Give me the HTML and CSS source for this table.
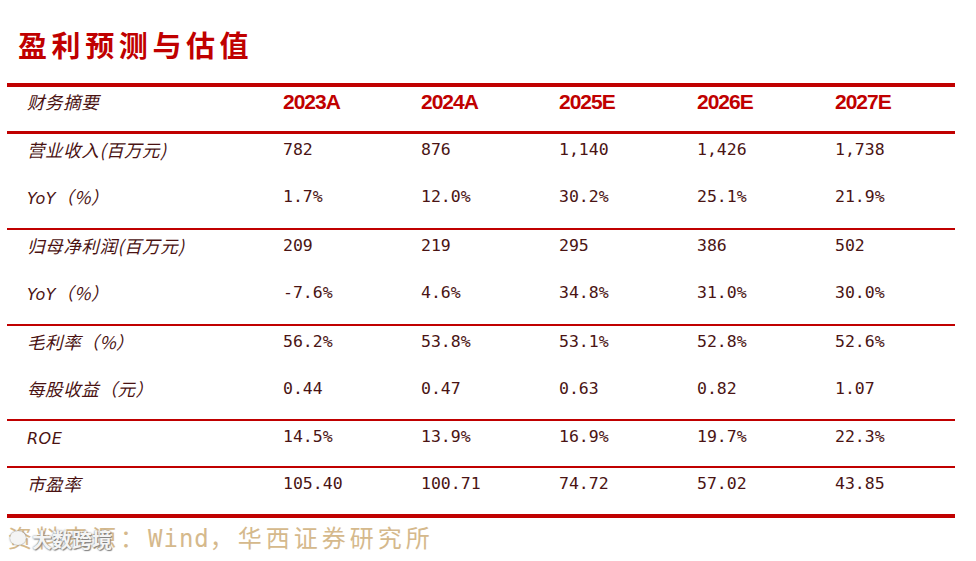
FILE: index.html
```html
<!DOCTYPE html>
<html lang="zh-CN">
<head>
<meta charset="utf-8">
<link rel="stylesheet" href="styles.css">
</head>
<body>
<div class="page">
  <h1 class="title">盈利预测与估值</h1>
  <div class="table">
    <div class="row head">
      <div class="label">财务摘要</div>
      <div class="year">2023A</div>
      <div class="year">2024A</div>
      <div class="year">2025E</div>
      <div class="year">2026E</div>
      <div class="year">2027E</div>
    </div>
    <div class="group">
      <div class="row">
        <div class="label">营业收入(百万元)</div>
        <div class="num">782</div><div class="num">876</div><div class="num">1,140</div><div class="num">1,426</div><div class="num">1,738</div>
      </div>
      <div class="row">
        <div class="label"><span class="lat">YoY</span>（%）</div>
        <div class="num">1.7%</div><div class="num">12.0%</div><div class="num">30.2%</div><div class="num">25.1%</div><div class="num">21.9%</div>
      </div>
    </div>
    <div class="group">
      <div class="row">
        <div class="label">归母净利润(百万元)</div>
        <div class="num">209</div><div class="num">219</div><div class="num">295</div><div class="num">386</div><div class="num">502</div>
      </div>
      <div class="row">
        <div class="label"><span class="lat">YoY</span>（%）</div>
        <div class="num">-7.6%</div><div class="num">4.6%</div><div class="num">34.8%</div><div class="num">31.0%</div><div class="num">30.0%</div>
      </div>
    </div>
    <div class="group">
      <div class="row">
        <div class="label">毛利率（%）</div>
        <div class="num">56.2%</div><div class="num">53.8%</div><div class="num">53.1%</div><div class="num">52.8%</div><div class="num">52.6%</div>
      </div>
      <div class="row short">
        <div class="label">每股收益（元）</div>
        <div class="num">0.44</div><div class="num">0.47</div><div class="num">0.63</div><div class="num">0.82</div><div class="num">1.07</div>
      </div>
    </div>
    <div class="group">
      <div class="row single">
        <div class="label"><span class="lat">ROE</span></div>
        <div class="num">14.5%</div><div class="num">13.9%</div><div class="num">16.9%</div><div class="num">19.7%</div><div class="num">22.3%</div>
      </div>
    </div>
    <div class="group last">
      <div class="row single2">
        <div class="label">市盈率</div>
        <div class="num">105.40</div><div class="num">100.71</div><div class="num">74.72</div><div class="num">57.02</div><div class="num">43.85</div>
      </div>
    </div>
  </div>
  <div class="source">资料来源：<span class="mono">Wind</span>，华西证券研究所
    <div class="watermark"><span class="wm-icon"></span>大数跨境</div>
  </div>
</div>
</body>
</html>
```

FILE: styles.css
```css
html, body {
  margin: 0;
  padding: 0;
  background: #ffffff;
}
.page {
  width: 976px;
  height: 561px;
  position: relative;
  overflow: hidden;
}
.title {
  margin: 0;
  padding: 26px 0 0 18px;
  height: 56px;
  box-sizing: border-box;
  font-family: "Noto Sans CJK SC", sans-serif;
  font-weight: 700;
  font-size: 29px;
  line-height: 36px;
  letter-spacing: 4.6px;
  color: #c00000;
}
.table {
  margin-left: 7px;
  width: 948px;
  border-top: 4px solid #c00000;
  margin-top: 27px;
}
.row {
  display: grid;
  grid-template-columns: 276px 138px 138px 138px 138px 1fr;
  height: 47px;
  align-items: start;
  padding-top: 3px;
  box-sizing: border-box;
}
.row.short { height: 46px; }
.row.single { height: 45px; }
.row.single2 { height: 46px; }
.head {
  height: 47px;
  border-bottom: 3px solid #c00000;
  padding-top: 0;
  box-sizing: border-box;
}
.group {
  border-bottom: 2px solid #c00000;
}
.group.last {
  border-bottom: 4px solid #c00000;
}
.label {
  padding-left: 20px;
  font-family: "Noto Sans CJK SC", sans-serif;
  font-style: italic;
  font-weight: 400;
  font-size: 17.5px;
  line-height: 26px;
  letter-spacing: 0.6px;
  color: #4a1212;
}
.label .lat {
  font-family: "DejaVu Sans", sans-serif;
  font-style: italic;
  font-size: 16px;
  letter-spacing: 0.5px;
}
.head .label {
  line-height: 30px;
}
.year {
  font-family: "Liberation Sans", Arial, sans-serif;
  font-weight: 700;
  font-size: 21px;
  letter-spacing: -1px;
  line-height: 30px;
  color: #c00000;
}
.num {
  font-family: "DejaVu Sans Mono", monospace;
  font-size: 16.5px;
  line-height: 26px;
  color: #4a1414;
}
.source {
  position: relative;
  margin: 4px 0 0 8px;
  font-family: "Noto Sans CJK SC", sans-serif;
  font-size: 24px;
  line-height: 30px;
  letter-spacing: 4px;
  color: #d5b98c;
}
.source .mono {
  font-family: "DejaVu Sans Mono", monospace;
  font-size: 24px;
  letter-spacing: 1px;
}
.watermark {
  position: absolute;
  left: 2px;
  top: 3px;
  display: flex;
  align-items: center;
  gap: 6px;
  font-family: "Noto Sans CJK SC", sans-serif;
  font-weight: 700;
  font-size: 20px;
  letter-spacing: 0;
  color: #f4f4f4;
  text-shadow: 0 0 2px #777, 1px 1px 1px #888;
  padding-left: 22px;
}
.wm-icon {
  position: absolute;
  left: 0;
  top: 6px;
  width: 16px;
  height: 14px;
  border-radius: 50%;
  background: #f4f4f4;
  box-shadow: 0 0 2px #777;
}
```
